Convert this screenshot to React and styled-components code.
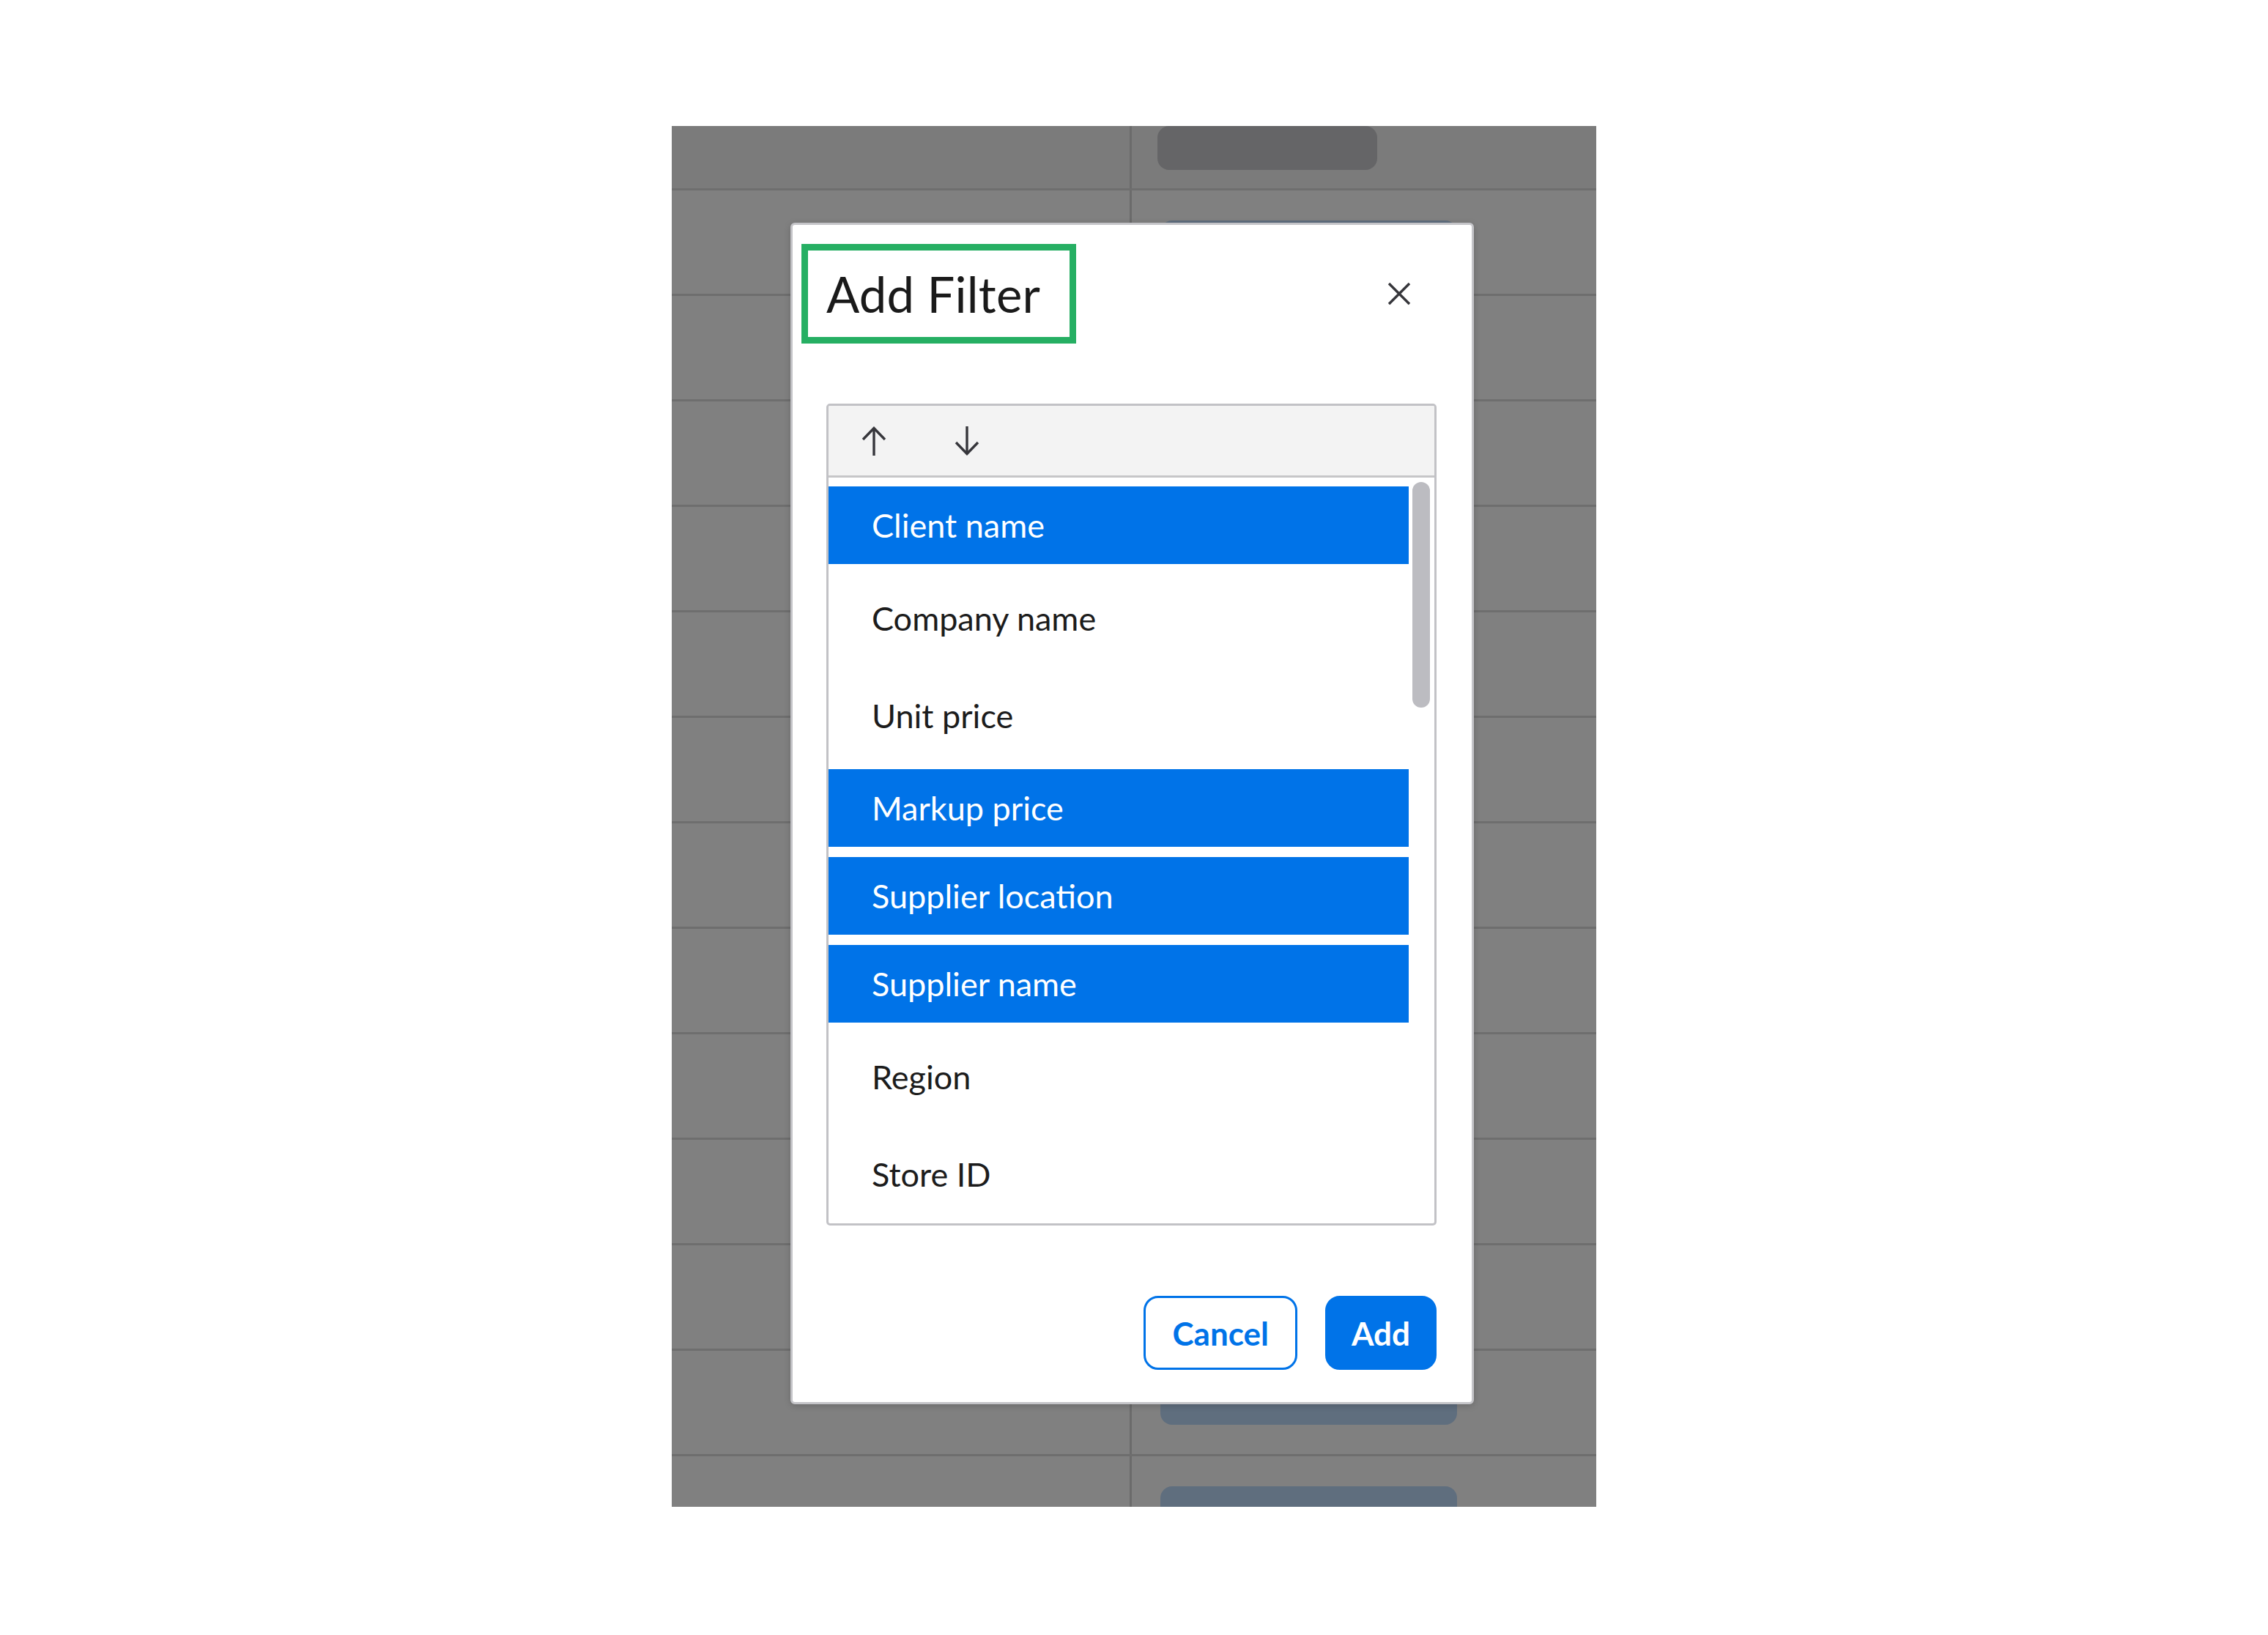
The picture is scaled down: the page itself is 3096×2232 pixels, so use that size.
import React from 'react'
import styled, { createGlobalStyle } from 'styled-components'

const GlobalStyle = createGlobalStyle`
  * { box-sizing: border-box; }
  html, body {
    margin: 0;
    padding: 0;
    background: #ffffff;
    font-family: Lato, 'Liberation Sans', sans-serif;
  }
`

const Page = styled.div`
  min-height: 100vh;
  display: flex;
  align-items: flex-start;
  justify-content: center;
  padding-top: 172px;
`

const Backdrop = styled.div`
  position: relative;
  width: 1262px;
  height: 1885px;
  background: #808080;
  overflow: hidden;
`

const Row = styled.div`
  display: grid;
  grid-template-columns: 628px 1fr;
  height: ${({ header }) => (header ? '85px' : '144px')};
  background: ${({ header }) => (header ? '#7b7b7b' : '#808080')};
  border-top: ${({ header }) => (header ? 'none' : '3px solid #6e6e6e')};
`

const Cell = styled.div`
  display: flex;
  align-items: ${({ top }) => (top ? 'flex-start' : 'center')};
  padding-left: ${({ inset }) => inset || 0}px;
  border-right: ${({ divider }) => (divider ? '3px solid #6b6b6b' : 'none')};
`

const Pill = styled.div`
  width: ${({ w }) => w}px;
  height: 60px;
  border-radius: 16px;
  background: ${({ dark }) => (dark ? '#656567' : '#5f6e7e')};
`

const Dialog = styled.div`
  position: absolute;
  top: 132px;
  left: 162px;
  width: 933px;
  background: #ffffff;
  border: 3px solid #c4c4c8;
  border-radius: 6px;
  box-shadow: 0 2px 10px rgba(0, 0, 0, 0.18);
  display: flex;
  flex-direction: column;
`

const DialogHeader = styled.div`
  display: flex;
  align-items: center;
  justify-content: space-between;
  padding: 26px 67px 0 12px;
`

const Title = styled.h2`
  margin: 0;
  height: 136px;
  display: flex;
  align-items: center;
  padding: 0 40px 0 25px;
  border: 9px solid #26af63;
  font-size: 67px;
  font-weight: 400;
  color: #1a1a1a;
  letter-spacing: 0.2px;
`

const IconButton = styled.button`
  display: grid;
  place-items: center;
  width: ${({ size }) => size}px;
  height: ${({ size }) => size}px;
  padding: 0;
  border: none;
  background: none;
  color: #36363b;
  cursor: pointer;
`

const DialogBody = styled.div`
  padding: 82px 48px 0 46px;
`

const ListBox = styled.div`
  height: 1122px;
  display: flex;
  flex-direction: column;
  border: 3px solid #c2c2c6;
  border-radius: 5px;
  overflow: hidden;
`

const Toolbar = styled.div`
  flex: none;
  height: 98px;
  display: flex;
  align-items: center;
  gap: 87px;
  padding-left: 42px;
  background: #f3f3f3;
  border-bottom: 3px solid #c6c6c8;
`

const Options = styled.div`
  position: relative;
  flex: 1;
  overflow: hidden;
  padding: 12px 35px 0 0;
`

const Option = styled.div`
  display: flex;
  align-items: center;
  height: ${({ selected }) => (selected ? 106 : 119)}px;
  margin-bottom: 14px;
  padding-left: 59px;
  font-size: 45px;
  color: ${({ selected }) => (selected ? '#ffffff' : '#1c1c1c')};
  background: ${({ selected }) => (selected ? '#0073e8' : 'transparent')};
`

const ScrollThumb = styled.div`
  position: absolute;
  top: 6px;
  right: 6px;
  width: 24px;
  height: 308px;
  border-radius: 12px;
  background: #bcbcc1;
`

const Footer = styled.div`
  display: flex;
  justify-content: flex-end;
  gap: 38px;
  padding: 96px 48px 44px;
`

const Button = styled.button`
  height: 101px;
  padding: 0 ${({ primary }) => (primary ? 33 : 36)}px;
  border: 3px solid #0073e8;
  border-radius: 20px;
  font-family: Lato, 'Liberation Sans', sans-serif;
  font-size: 44px;
  font-weight: 700;
  color: ${({ primary }) => (primary ? '#ffffff' : '#0073e8')};
  background: ${({ primary }) => (primary ? '#0073e8' : '#ffffff')};
  cursor: pointer;
`

const ArrowUp = () => (
  <svg width="34" height="40" viewBox="0 0 34 40" fill="none" stroke="currentColor" strokeWidth="3.4">
    <path d="M17 2 V40" />
    <path d="M2 18 L17 2.5 L32 18" />
  </svg>
)

const ArrowDown = () => (
  <svg width="34" height="40" viewBox="0 0 34 40" fill="none" stroke="currentColor" strokeWidth="3.4">
    <path d="M17 0 V38" />
    <path d="M2 22 L17 37.5 L32 22" />
  </svg>
)

const CloseIcon = () => (
  <svg width="32" height="32" viewBox="0 0 32 32" fill="none" stroke="currentColor" strokeWidth="3.4">
    <path d="M2 2 L30 30 M30 2 L2 30" />
  </svg>
)

const options = [
  { label: 'Client name', selected: true },
  { label: 'Company name' },
  { label: 'Unit price' },
  { label: 'Markup price', selected: true },
  { label: 'Supplier location', selected: true },
  { label: 'Supplier name', selected: true },
  { label: 'Region' },
  { label: 'Store ID' },
]

export default function App() {
  const rows = Array.from({ length: 13 })
  return (
    <Page>
      <GlobalStyle />
      <Backdrop>
        <Row header>
          <Cell divider />
          <Cell top inset={35}>
            <Pill dark w={300} />
          </Cell>
        </Row>
        {rows.map((_, i) => (
          <Row key={i}>
            <Cell divider />
            <Cell inset={39}>
              <Pill w={405} />
            </Cell>
          </Row>
        ))}

        <Dialog role="dialog" aria-label="Add Filter">
          <DialogHeader>
            <Title>Add Filter</Title>
            <IconButton size={64} aria-label="Close">
              <CloseIcon />
            </IconButton>
          </DialogHeader>
          <DialogBody>
            <ListBox>
              <Toolbar>
                <IconButton size={40} aria-label="Move up">
                  <ArrowUp />
                </IconButton>
                <IconButton size={40} aria-label="Move down">
                  <ArrowDown />
                </IconButton>
              </Toolbar>
              <Options>
                {options.map(o => (
                  <Option key={o.label} selected={o.selected}>
                    {o.label}
                  </Option>
                ))}
                <ScrollThumb />
              </Options>
            </ListBox>
          </DialogBody>
          <Footer>
            <Button>Cancel</Button>
            <Button primary>Add</Button>
          </Footer>
        </Dialog>
      </Backdrop>
    </Page>
  )
}
